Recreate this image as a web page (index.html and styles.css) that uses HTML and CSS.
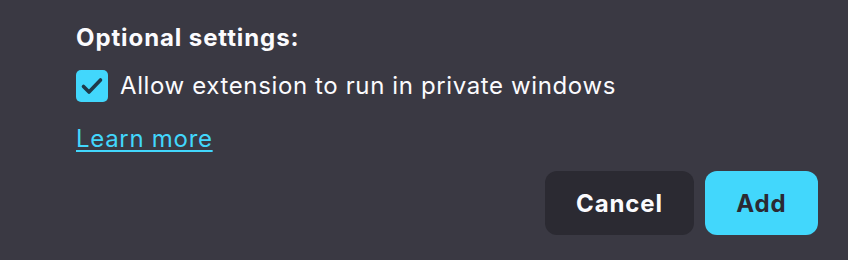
FILE: index.html
```html
<!DOCTYPE html>
<html>
<head>
<meta charset="utf-8">
<link rel="stylesheet" href="styles.css">
</head>
<body>
<div class="panel">
  <div class="heading">Optional settings:</div>
  <label class="option">
    <span class="box">
      <svg width="32" height="32" viewBox="0 0 32 32"><path d="M7.5 16.5 L13 22 L24.5 10" fill="none" stroke="#1f3a4a" stroke-width="3.6" stroke-linecap="round" stroke-linejoin="round"/></svg>
    </span>
    <span class="label">Allow extension to run in private windows</span>
  </label>
  <a class="learn" href="#">Learn more</a>
  <div class="actions">
    <button class="btn cancel">Cancel</button>
    <button class="btn add">Add</button>
  </div>
</div>
</body>
</html>
```
FILE: styles.css
```css
html, body {
  margin: 0;
  padding: 0;
  background: #3a3943;
  width: 848px;
  height: 260px;
  overflow: hidden;
}
.panel {
  padding: 22px 30px 0 76px;
  font-family: Inter, "Noto Sans", sans-serif;
  color: #fbfbfe;
  display: flex;
  flex-direction: column;
}
.heading {
  font-size: 24px;
  font-weight: 700;
  line-height: 32px;
  letter-spacing: 0.9px;
}
.option {
  display: flex;
  align-items: center;
  gap: 12px;
  margin-top: 16px;
}
.box {
  width: 32px;
  height: 32px;
  border-radius: 5px;
  background: #42d7fc;
  display: flex;
}
.label {
  font-size: 24px;
  line-height: 32px;
  letter-spacing: 0.62px;
}
.learn {
  margin-top: 21px;
  font-size: 24px;
  line-height: 32px;
  letter-spacing: 0.7px;
  color: #42d7fc;
  text-decoration: underline;
  text-underline-offset: 3px;
  align-self: flex-start;
}
.actions {
  display: flex;
  justify-content: flex-end;
  gap: 11px;
  margin-top: 16px;
}
.btn {
  height: 64px;
  border: none;
  border-radius: 12px;
  font-family: Inter, "Noto Sans", sans-serif;
  font-size: 24px;
  font-weight: 700;
  letter-spacing: 0.9px;
  padding: 0;
}
.cancel {
  width: 149px;
  background: #2b2a32;
  color: #fbfbfe;
}
.add {
  width: 113px;
  background: #42d7fc;
  color: #2b2a33;
}
```
